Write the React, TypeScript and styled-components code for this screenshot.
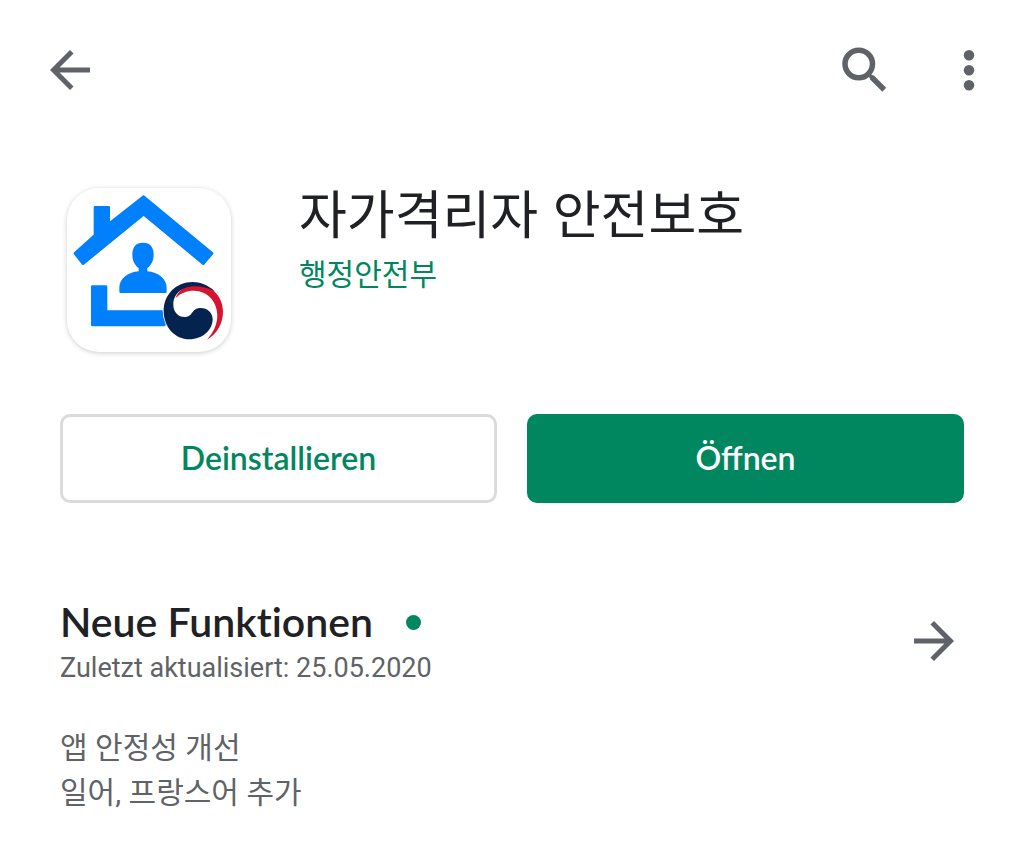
import React from "react";
import styled, { createGlobalStyle } from "styled-components";

const GlobalStyle = createGlobalStyle`
  * { box-sizing: border-box; }
  body { margin: 0; background: #fff; }
  h1, h2, p { margin: 0; font-weight: 400; }
`;

const latin = `Lato, "Noto Sans CJK KR", sans-serif`;
const text = `Roboto, "Noto Sans CJK KR", sans-serif`;
const korean = `"Noto Sans CJK KR", sans-serif`;

const Page = styled.div`
  padding-bottom: 40px;
  color: #202124;
  font-family: ${text};
`;

const TopBar = styled.header`
  display: flex;
  align-items: center;
  padding: 40px 25px 0 40px;
`;

const Spacer = styled.div`
  flex: 1;
`;

const IconButton = styled.button<{ $gap?: number }>`
  display: block;
  flex: none;
  width: 60px;
  height: 60px;
  margin: 0 0 0 ${(p) => p.$gap ?? 0}px;
  padding: 0;
  border: 0;
  background: none;
  color: #5f6368;
  cursor: pointer;

  svg {
    display: block;
    width: 60px;
    height: 60px;
  }
`;

const Hero = styled.section`
  display: flex;
  gap: 68px;
  padding: 88px 60px 0 67px;
`;

const AppIcon = styled.div`
  flex: none;
  width: 164px;
  height: 164px;
  border-radius: 32px;
  background: #fff;
  box-shadow: 0 1px 5px rgba(0, 0, 0, 0.2);

  svg {
    display: block;
    width: 164px;
    height: 164px;
  }
`;

const AppName = styled.h1`
  font: 400 52px/48px ${korean};
`;

const Developer = styled.a`
  display: block;
  margin-top: 14px;
  color: #01875f;
  font: 400 30px/44px ${korean};
  text-decoration: none;
`;

const Actions = styled.div`
  display: grid;
  grid-template-columns: 1fr 1fr;
  gap: 30px;
  padding: 62px 60px 0;
`;

const ActionButton = styled.button<{ $primary?: boolean }>`
  height: 89px;
  padding: 0 0 2px;
  border: 3px solid ${(p) => (p.$primary ? "#01875f" : "#dadcdb")};
  border-radius: 10px;
  background: ${(p) => (p.$primary ? "#01875f" : "#fff")};
  color: ${(p) => (p.$primary ? "#fff" : "#01875f")};
  font: 600 32px/40px ${latin};
  cursor: pointer;
`;

const News = styled.section`
  padding: 95px 60px 0;
`;

const NewsHead = styled.div`
  display: flex;
  align-items: flex-start;
  justify-content: space-between;

  ${IconButton} {
    margin-top: 13px;
  }
`;

const NewsTitle = styled.h2`
  display: flex;
  align-items: center;
  gap: 33px;
  font: 600 41px/48px ${latin};
  font-variant-ligatures: none;
`;

const Dot = styled.span`
  width: 15px;
  height: 15px;
  border-radius: 50%;
  background: #01875f;
`;

const Updated = styled.p`
  color: #5f6368;
  font: 400 27px/44px ${text};
`;

const Notes = styled.p`
  margin-top: 35px;
  color: #5f6368;
  font: 400 30px/45px ${text};
`;

const HouseLogo = () => (
  <svg viewBox="51 53 492 492" aria-hidden="true">
    <g fill="#0080fc" stroke="#0080fc" strokeWidth="8" strokeLinejoin="round">
      <path d="M135 111h41v50l105-82 205 170-26 31L281 132 99 280l-24-31 60-54z" />
      <path d="M127 349h41v75h175v40H127z" />
    </g>
    <path
      fill="#0080fc"
      d="M279 217c22 0 32 14 32 36 0 17-7 31-19 40v10c33 3 58 22 58 50v11q0 4-4 4H212q-4 0-4-4v-11c0-28 25-47 58-50v-10c-12-9-19-23-19-40 0-22 10-36 32-36z"
    />
    <circle cx="430" cy="421" r="92" fill="#fff" />
    <path
      fill="#d8132f"
      d="M376 384c11-27 36-43 64-43 43 0 79 38 79 83 0 34-17 66-48 84 20-22 31-46 31-73 0-40-29-74-70-74-22 0-42 8-56 23z"
    />
    <path
      fill="#04234f"
      d="M494 363C474 344 450 335 428 335c-50 0-87 38-87 87 0 48 34 85 77 85 41 0 70-29 70-60 0-20-16-34-36-34-29 0-22 27-48 27-20 0-34-16-34-37 0-35 30-55 62-55 24 0 44 5 62 15z"
    />
  </svg>
);

const Arrow = ({ right = false }: { right?: boolean }) => (
  <svg viewBox="0 0 24 24" fill="currentColor" aria-hidden="true">
    <path
      d={
        right
          ? "M4 11h12.17l-5.59-5.59L12 4l8 8-8 8-1.41-1.41L16.17 13H4z"
          : "M20 11H7.83l5.59-5.59L12 4l-8 8 8 8 1.41-1.41L7.83 13H20z"
      }
    />
  </svg>
);

export default function App() {
  return (
    <Page>
      <GlobalStyle />
      <TopBar>
        <IconButton aria-label="Zurück">
          <Arrow />
        </IconButton>
        <Spacer />
        <IconButton aria-label="Suchen">
          <svg viewBox="0 0 24 24" fill="none" stroke="currentColor" aria-hidden="true">
            <circle cx="9.5" cy="9.6" r="5.5" strokeWidth="2.2" />
            <path d="M14.7 14.9l5 5" strokeWidth="2.2" />
            <path d="M14.4 14.6l.6.6" strokeWidth="1.6" strokeLinecap="round" />
          </svg>
        </IconButton>
        <IconButton $gap={44} aria-label="Weitere Optionen">
          <svg viewBox="0 0 24 24" fill="currentColor" aria-hidden="true">
            <circle cx="12" cy="6.1" r="2.1" />
            <circle cx="12" cy="12.1" r="2.1" />
            <circle cx="12" cy="18.1" r="2.1" />
          </svg>
        </IconButton>
      </TopBar>
      <main>
        <Hero>
          <AppIcon>
            <HouseLogo />
          </AppIcon>
          <div>
            <AppName lang="ko">자가격리자 안전보호</AppName>
            <Developer lang="ko" href="#developer">행정안전부</Developer>
          </div>
        </Hero>
        <Actions>
          <ActionButton>Deinstallieren</ActionButton>
          <ActionButton $primary>Öffnen</ActionButton>
        </Actions>
        <News>
          <NewsHead>
            <div>
              <NewsTitle>
                Neue Funktionen
                <Dot />
              </NewsTitle>
              <Updated>Zuletzt aktualisiert: 25.05.2020</Updated>
            </div>
            <IconButton aria-label="Neue Funktionen anzeigen">
              <Arrow right />
            </IconButton>
          </NewsHead>
          <Notes lang="ko">
            앱 안정성 개선
            <br />
            일어, 프랑스어 추가
          </Notes>
        </News>
      </main>
    </Page>
  );
}
